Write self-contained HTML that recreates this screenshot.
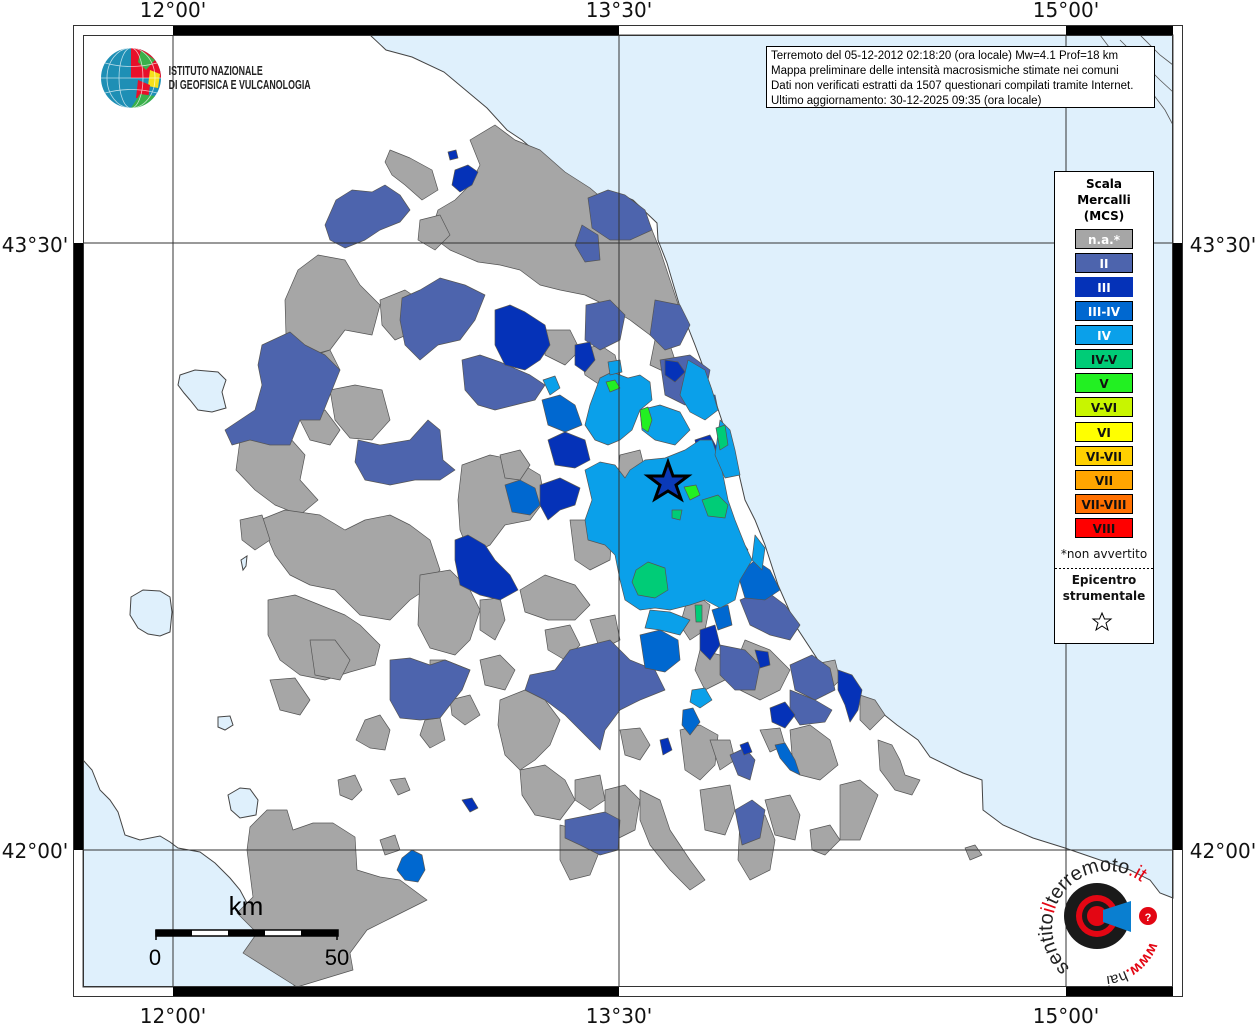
<!DOCTYPE html>
<html><head><meta charset="utf-8"><style>
html,body{margin:0;padding:0;background:#fff;width:1256px;height:1024px;overflow:hidden}
svg{display:block}
</style></head><body>
<svg width="1256" height="1024" viewBox="0 0 1256 1024" xmlns="http://www.w3.org/2000/svg" font-family="Liberation Sans, sans-serif">
<rect x="0" y="0" width="1256" height="1024" fill="#fff"/>
<!-- Seas -->
<g fill="#dff0fc" stroke="#444" stroke-width="1">
<path d="M370,35 L386,50 L412,57 L444,72 L487,108 L507,130 L522,140 L537,153 L560,173 L582,185 L600,197 L617,193 L633,200 L657,223 L658,240 L667,263 L680,307 L695,345 L710,385 L725,430 L738,470 L745,500 L755,520 L765,545 L778,585 L797,628 L820,663 L857,693 L897,725 L918,740 L930,757 L963,773 L982,780 L983,810 L1003,825 L1033,838 L1065,848 L1100,860 L1130,870 L1150,880 L1160,893 L1173,898 L1173,35 Z"/>
<path d="M83,760 L92,770 L100,790 L110,800 L118,812 L125,835 L140,840 L160,836 L170,842 L178,848 L200,852 L215,863 L230,878 L240,890 L248,905 L252,925 L256,935 L258,948 L270,950 L278,955 L295,987 L83,987 Z"/>
<path d="M180,375 L195,370 L218,372 L226,380 L222,392 L226,408 L212,412 L198,410 L190,400 L184,393 L178,385 Z"/>
<path d="M131,597 L143,590 L160,591 L170,597 L172,612 L170,632 L160,636 L148,634 L138,628 L130,615 Z"/>
<path d="M228,795 L240,788 L250,789 L258,800 L256,815 L240,818 L231,810 Z"/>
<path d="M218,717 L230,716 L233,725 L225,730 L218,727 Z"/>
<path d="M241,560 L247,556 L246,566 L243,570 Z"/>
</g>
<g fill="none" stroke="#555" stroke-width="0.8">
<path d="M1100,35 L1115,55 L1130,70 L1150,90 L1165,110 L1173,125"/>
<path d="M1120,40 L1140,60 L1160,80 L1173,92"/>
<path d="M1140,35 L1160,55 L1173,65"/>
</g>
<!-- Land municipalities -->
<g stroke="#555" stroke-width="0.7" stroke-linejoin="round">
<g fill="#a6a6a6">
<path d="M470,140 L495,125 L515,140 L540,150 L565,172 L590,188 L610,205 L630,200 L650,225 L660,250 L670,280 L680,310 L670,330 L650,335 L630,320 L605,305 L585,295 L560,290 L540,285 L520,270 L500,265 L478,262 L450,250 L430,235 L438,210 L455,200 L470,185 L480,165 Z"/>
<path d="M390,150 L410,158 L432,170 L438,190 L422,200 L405,185 L392,175 L385,162 Z"/>
<path d="M298,270 L318,255 L345,260 L360,285 L380,305 L372,335 L345,330 L330,350 L300,358 L286,335 L285,300 Z"/>
<path d="M330,390 L355,385 L382,390 L390,420 L372,440 L350,438 L335,420 Z"/>
<path d="M380,300 L405,290 L420,300 L418,330 L395,340 L382,325 Z"/>
<path d="M240,440 L262,432 L290,438 L305,455 L300,480 L318,500 L300,515 L275,505 L255,490 L236,470 Z"/>
<path d="M260,520 L285,510 L320,515 L345,530 L365,520 L390,515 L410,525 L430,540 L440,570 L425,590 L410,600 L390,620 L360,615 L335,590 L310,585 L290,575 L275,555 Z"/>
<path d="M462,465 L490,455 L515,460 L540,475 L545,500 L530,520 L505,525 L490,545 L470,555 L460,530 L458,500 Z"/>
<path d="M268,600 L295,595 L320,605 L345,615 L360,625 L380,645 L375,665 L350,672 L325,680 L300,675 L280,660 L268,635 Z"/>
<path d="M420,575 L450,570 L470,590 L480,610 L470,640 L455,655 L430,648 L418,625 Z"/>
<path d="M480,600 L500,598 L505,620 L495,640 L480,630 Z"/>
<path d="M520,590 L545,575 L575,585 L590,605 L575,620 L548,620 L525,612 Z"/>
<path d="M570,520 L600,520 L612,535 L610,560 L590,570 L575,560 Z"/>
<path d="M500,455 L520,450 L530,465 L520,480 L505,478 Z"/>
<path d="M300,360 L330,350 L340,370 L325,390 L305,385 Z"/>
<path d="M300,420 L325,410 L340,430 L330,445 L310,440 Z"/>
<path d="M240,520 L262,515 L270,540 L255,550 L242,540 Z"/>
<path d="M270,680 L295,678 L310,700 L300,715 L280,710 Z"/>
<path d="M310,640 L335,640 L350,660 L340,680 L315,675 Z"/>
<path d="M430,660 L445,660 L470,670 L462,690 L445,700 L430,685 Z"/>
<path d="M480,660 L500,655 L515,670 L505,690 L485,685 Z"/>
<path d="M545,630 L570,625 L580,645 L565,660 L548,650 Z"/>
<path d="M590,620 L615,615 L620,640 L600,650 Z"/>
<path d="M450,700 L470,695 L480,715 L465,725 L452,715 Z"/>
<path d="M425,720 L440,718 L445,740 L430,748 L420,735 Z"/>
<path d="M365,720 L380,715 L390,730 L385,750 L370,748 L356,740 Z"/>
<path d="M338,780 L355,775 L362,790 L352,800 L340,795 Z"/>
<path d="M390,780 L405,778 L410,790 L398,795 Z"/>
<path d="M267,810 L287,810 L293,830 L313,823 L333,823 L355,837 L357,870 L380,877 L400,880 L427,900 L393,917 L367,930 L350,953 L353,970 L297,987 L243,953 L257,933 L237,913 L253,897 L247,850 L250,827 Z"/>
<path d="M500,700 L525,690 L545,700 L560,720 L550,745 L535,760 L520,770 L505,755 L498,725 Z"/>
<path d="M520,770 L545,765 L565,780 L575,800 L560,820 L535,815 L522,795 Z"/>
<path d="M560,825 L580,830 L600,850 L590,875 L570,880 L560,860 Z"/>
<path d="M575,780 L600,775 L605,800 L590,810 L575,800 Z"/>
<path d="M605,790 L625,785 L640,800 L635,830 L615,840 L605,815 Z"/>
<path d="M640,790 L660,800 L670,830 L690,860 L705,880 L690,890 L670,870 L650,845 L640,820 Z"/>
<path d="M620,730 L640,728 L650,745 L640,760 L625,755 Z"/>
<path d="M680,730 L700,725 L718,735 L715,765 L700,780 L685,770 Z"/>
<path d="M700,790 L730,785 L735,810 L725,835 L705,830 Z"/>
<path d="M740,820 L765,815 L775,840 L770,870 L750,880 L738,860 Z"/>
<path d="M765,800 L790,795 L800,815 L795,840 L775,835 Z"/>
<path d="M810,830 L830,825 L840,840 L825,855 L812,850 Z"/>
<path d="M840,785 L860,780 L878,795 L870,815 L860,840 L840,840 Z"/>
<path d="M878,740 L892,745 L900,760 L905,775 L920,780 L912,795 L895,790 L880,770 Z"/>
<path d="M860,695 L875,700 L885,715 L870,730 L860,720 Z"/>
<path d="M790,730 L810,725 L830,740 L838,765 L820,780 L800,775 L792,755 Z"/>
<path d="M745,640 L770,650 L790,670 L780,690 L760,700 L740,690 L735,665 Z"/>
<path d="M700,650 L720,655 L725,680 L705,690 L695,670 Z"/>
<path d="M810,665 L835,660 L840,680 L825,695 L810,690 Z"/>
<path d="M710,740 L730,740 L735,760 L720,770 Z"/>
<path d="M760,730 L780,728 L785,745 L770,752 Z"/>
<path d="M965,848 L975,845 L982,855 L970,860 Z"/>
<path d="M690,590 L710,605 L705,630 L690,640 L680,625 Z"/>
<path d="M580,350 L600,345 L615,355 L620,375 L600,385 L585,375 Z"/>
<path d="M655,340 L670,345 L675,360 L665,372 L650,365 Z"/>
<path d="M620,455 L640,450 L645,470 L630,485 L618,475 Z"/>
<path d="M545,330 L570,330 L580,350 L565,365 L545,355 Z"/>
<path d="M420,220 L440,215 L450,235 L435,250 L418,240 Z"/>
<path d="M380,840 L395,835 L400,850 L385,855 Z"/>
</g>
<g fill="#4d64ad">
<path d="M336,200 L352,190 L372,192 L385,185 L400,195 L410,210 L400,222 L380,230 L365,240 L345,248 L330,240 L325,225 Z"/>
<path d="M402,298 L420,290 L440,278 L465,285 L485,295 L475,320 L460,340 L438,345 L420,360 L405,345 L400,320 Z"/>
<path d="M262,345 L290,332 L305,345 L325,355 L340,370 L330,395 L320,420 L300,420 L290,445 L270,445 L250,440 L232,445 L225,430 L240,420 L255,410 L262,385 L258,365 Z"/>
<path d="M358,440 L380,445 L410,440 L428,420 L440,430 L443,460 L455,470 L440,480 L415,480 L390,485 L365,480 L355,462 Z"/>
<path d="M462,360 L480,355 L500,362 L530,375 L545,385 L535,400 L515,405 L495,410 L478,405 L465,390 Z"/>
<path d="M588,198 L608,190 L625,195 L645,210 L652,230 L630,240 L610,240 L592,228 Z"/>
<path d="M586,305 L610,300 L625,315 L620,340 L600,350 L585,340 Z"/>
<path d="M655,300 L680,305 L690,325 L680,345 L665,350 L650,335 Z"/>
<path d="M660,360 L690,355 L710,370 L705,395 L685,405 L665,395 Z"/>
<path d="M530,675 L555,670 L570,650 L590,645 L610,640 L630,660 L655,670 L665,690 L640,700 L620,710 L605,730 L600,750 L585,735 L565,715 L545,700 L525,690 Z"/>
<path d="M390,660 L410,658 L430,665 L445,660 L470,670 L462,690 L450,705 L440,718 L420,720 L400,718 L390,700 Z"/>
<path d="M565,820 L590,815 L605,812 L620,820 L618,850 L600,855 L580,845 L565,838 Z"/>
<path d="M735,810 L752,800 L765,810 L760,838 L742,845 Z"/>
<path d="M740,600 L765,590 L785,605 L800,625 L790,640 L770,635 L750,625 Z"/>
<path d="M790,665 L812,655 L830,668 L835,690 L815,700 L795,690 Z"/>
<path d="M790,690 L815,700 L832,710 L825,722 L800,725 L790,710 Z"/>
<path d="M730,755 L745,748 L755,760 L750,780 L738,775 Z"/>
<path d="M720,645 L745,650 L760,665 L755,690 L735,690 L720,675 Z"/>
<path d="M582,225 L598,235 L600,260 L585,262 L575,245 Z"/>
</g>
<g fill="#0532b8">
<path d="M455,170 L468,165 L478,172 L472,185 L460,192 L452,185 Z"/>
<path d="M448,152 L456,150 L458,158 L450,160 Z"/>
<path d="M495,310 L510,305 L525,312 L545,325 L550,345 L540,360 L525,370 L505,365 L495,345 Z"/>
<path d="M455,540 L468,535 L485,545 L495,560 L510,575 L518,590 L500,600 L480,595 L460,585 L455,560 Z"/>
<path d="M540,485 L560,478 L580,488 L575,505 L560,510 L548,520 L540,505 Z"/>
<path d="M548,440 L565,432 L585,440 L590,460 L575,468 L555,465 Z"/>
<path d="M575,345 L590,342 L595,360 L585,372 L575,365 Z"/>
<path d="M640,475 L660,468 L680,470 L700,465 L695,440 L710,435 L718,450 L712,475 L700,490 L685,500 L670,498 L650,500 L640,490 Z"/>
<path d="M665,360 L678,362 L685,372 L675,382 L665,375 Z"/>
<path d="M838,670 L852,675 L862,690 L858,710 L850,722 L845,705 L838,690 Z"/>
<path d="M770,708 L785,702 L795,715 L785,728 L772,722 Z"/>
<path d="M700,630 L715,625 L720,645 L710,660 L700,650 Z"/>
<path d="M660,740 L668,738 L672,750 L663,755 Z"/>
<path d="M462,800 L472,798 L478,808 L470,812 Z"/>
<path d="M740,745 L748,742 L752,752 L744,755 Z"/>
<path d="M755,650 L768,652 L770,665 L760,668 Z"/>
</g>
<g fill="#0068d0">
<path d="M505,485 L520,480 L535,488 L540,505 L530,515 L512,512 Z"/>
<path d="M542,400 L560,395 L575,405 L582,425 L565,432 L548,425 Z"/>
<path d="M600,395 L620,400 L625,415 L612,425 L600,415 Z"/>
<path d="M640,635 L660,630 L678,640 L680,660 L665,672 L645,668 Z"/>
<path d="M738,575 L755,560 L770,570 L780,590 L765,600 L745,598 Z"/>
<path d="M720,540 L738,535 L748,550 L735,560 L722,555 Z"/>
<path d="M402,858 L412,850 L422,855 L425,870 L418,882 L405,880 L397,870 Z"/>
<path d="M775,745 L785,743 L795,760 L800,775 L790,770 L780,758 Z"/>
<path d="M683,710 L693,708 L700,722 L690,735 L682,725 Z"/>
<path d="M702,398 L715,395 L718,410 L705,412 Z"/>
<path d="M712,610 L728,605 L732,625 L718,630 Z"/>
</g>
<g fill="#0aa0ea">
<path d="M585,470 L600,462 L615,465 L625,478 L630,470 L645,460 L665,458 L685,450 L700,440 L712,440 L722,470 L728,500 L735,520 L745,545 L752,560 L740,580 L735,600 L720,608 L705,600 L690,605 L670,610 L655,608 L640,610 L625,600 L620,580 L615,555 L605,545 L588,540 L585,520 L592,500 Z"/>
<path d="M600,378 L612,372 L628,378 L640,375 L650,382 L652,400 L640,410 L632,430 L620,440 L608,445 L595,440 L585,425 L590,405 Z"/>
<path d="M640,410 L660,405 L680,412 L690,430 L675,445 L655,440 L642,430 Z"/>
<path d="M688,360 L705,370 L712,390 L718,410 L705,420 L690,412 L680,395 Z"/>
<path d="M720,420 L730,430 L735,450 L740,475 L725,478 L715,455 Z"/>
<path d="M755,535 L765,548 L762,570 L752,560 Z"/>
<path d="M692,690 L705,688 L712,700 L700,708 L690,702 Z"/>
<path d="M543,380 L555,376 L560,388 L550,395 Z"/>
<path d="M608,362 L620,360 L622,372 L610,375 Z"/>
<path d="M650,610 L670,612 L690,620 L680,635 L660,630 L645,628 Z"/>
</g>
<g fill="#00cc77">
<path d="M636,570 L648,562 L665,568 L668,590 L655,598 L638,595 L632,582 Z"/>
<path d="M702,500 L718,495 L728,505 L725,518 L708,516 Z"/>
<path d="M716,428 L725,425 L728,445 L720,450 Z"/>
<path d="M672,510 L682,510 L680,520 L672,518 Z"/>
<path d="M695,605 L702,605 L702,622 L696,622 Z"/>
</g>
<g fill="#22f022">
<path d="M640,410 L648,407 L652,420 L648,432 L642,428 Z"/>
<path d="M606,382 L615,380 L620,388 L610,392 Z"/>
<path d="M684,487 L696,485 L700,495 L690,500 Z"/>
</g>
</g>
<g stroke="#333" stroke-width="1">
<line x1="173" y1="35" x2="173" y2="987"/>
<line x1="619" y1="35" x2="619" y2="987"/>
<line x1="1066" y1="35" x2="1066" y2="987"/>
<line x1="83" y1="243" x2="1173" y2="243"/>
<line x1="83" y1="850" x2="1173" y2="850"/>
</g>
<polygon points="668,462 673,476 688,476 676,485 681,499 668,491 655,499 660,485 648,476 663,476" fill="#0a3ab8" stroke="#000" stroke-width="3"/>
<g fill="#000">
<rect x="173" y="25" width="446" height="10"/>
<rect x="1066" y="25" width="107" height="10"/>
<rect x="173" y="987" width="446" height="10"/>
<rect x="1066" y="987" width="107" height="10"/>
<rect x="73" y="243" width="10" height="607"/>
<rect x="1173" y="243" width="10" height="607"/>
</g>
<rect x="73.5" y="25.5" width="1109" height="971" fill="none" stroke="#333" stroke-width="1"/>
<rect x="83.5" y="35.5" width="1089" height="951" fill="none" stroke="#333" stroke-width="1"/>
<g font-family="DejaVu Sans, sans-serif" font-size="20" fill="#111" text-anchor="middle">
<text x="173" y="17">12°00'</text>
<text x="619" y="17">13°30'</text>
<text x="1066" y="17">15°00'</text>
<text x="173" y="1023">12°00'</text>
<text x="619" y="1023">13°30'</text>
<text x="1066" y="1023">15°00'</text>
<text x="35" y="252">43°30'</text>
<text x="35" y="858">42°00'</text>
<text x="1223" y="252">43°30'</text>
<text x="1223" y="858">42°00'</text>
</g>
<rect x="766.5" y="46.5" width="388" height="61" fill="#fff" stroke="#000"/>
<g font-size="11.5" fill="#000">
<text x="771" y="59">Terremoto del 05-12-2012 02:18:20 (ora locale) Mw=4.1 Prof=18 km</text>
<text x="771" y="74">Mappa preliminare delle intensità macrosismiche stimate nei comuni</text>
<text x="771" y="89">Dati non verificati estratti da 1507 questionari compilati tramite Internet.</text>
<text x="771" y="104">Ultimo aggiornamento: 30-12-2025 09:35 (ora locale)</text>
</g>
<rect x="1054.5" y="171.5" width="99" height="472" fill="#fff" stroke="#000"/>
<g font-family="DejaVu Sans, sans-serif" font-size="12" font-weight="bold" text-anchor="middle">
<text x="1104" y="188">Scala</text>
<text x="1104" y="204">Mercalli</text>
<text x="1104" y="220">(MCS)</text>
<rect x="1075.5" y="229.5" width="57" height="19" fill="#a6a6a6" stroke="#000"/><text x="1104" y="244" fill="#fff">n.a.*</text>
<rect x="1075.5" y="253.5" width="57" height="19" fill="#4d64ad" stroke="#000"/><text x="1104" y="268" fill="#fff">II</text>
<rect x="1075.5" y="277.5" width="57" height="19" fill="#0532b8" stroke="#0532b8"/><text x="1104" y="292" fill="#fff">III</text>
<rect x="1075.5" y="301.5" width="57" height="19" fill="#0068d0" stroke="#000"/><text x="1104" y="316" fill="#fff">III-IV</text>
<rect x="1075.5" y="325.5" width="57" height="19" fill="#0aa0ea" stroke="#000"/><text x="1104" y="340" fill="#fff">IV</text>
<rect x="1075.5" y="349.5" width="57" height="19" fill="#00cc77" stroke="#000"/><text x="1104" y="364" fill="#111">IV-V</text>
<rect x="1075.5" y="373.5" width="57" height="19" fill="#22f022" stroke="#000"/><text x="1104" y="388" fill="#111">V</text>
<rect x="1075.5" y="397.5" width="57" height="19" fill="#c8f500" stroke="#000"/><text x="1104" y="412" fill="#111">V-VI</text>
<rect x="1075.5" y="422.5" width="57" height="19" fill="#ffff00" stroke="#000"/><text x="1104" y="437" fill="#111">VI</text>
<rect x="1075.5" y="446.5" width="57" height="19" fill="#ffd000" stroke="#000"/><text x="1104" y="461" fill="#111">VI-VII</text>
<rect x="1075.5" y="470.5" width="57" height="19" fill="#ffa500" stroke="#000"/><text x="1104" y="485" fill="#111">VII</text>
<rect x="1075.5" y="494.5" width="57" height="19" fill="#ff7000" stroke="#000"/><text x="1104" y="509" fill="#111">VII-VIII</text>
<rect x="1075.5" y="518.5" width="57" height="19" fill="#ff0000" stroke="#000"/><text x="1104" y="533" fill="#111">VIII</text>
<text x="1104" y="558" font-weight="normal" fill="#111">*non avvertito</text>
<text x="1104" y="584" fill="#111">Epicentro</text>
<text x="1104" y="600" fill="#111">strumentale</text>
</g>
<line x1="1055" y1="568.5" x2="1153" y2="568.5" stroke="#000" stroke-dasharray="2,2"/>
<polygon points="1102,613 1104.5,619 1111,619 1106,623 1108,630 1102,626 1096,630 1098,623 1093,619 1099.5,619" fill="#fff" stroke="#000" stroke-width="1"/>
<g>
<rect x="156" y="930" width="182" height="6" fill="#fff" stroke="#000" stroke-width="1.5"/>
<rect x="156" y="930" width="36" height="6" fill="#000"/>
<rect x="228" y="930" width="37" height="6" fill="#000"/>
<rect x="301" y="930" width="37" height="6" fill="#000"/>
<line x1="156" y1="930" x2="156" y2="940" stroke="#000" stroke-width="1.5"/>
<line x1="337" y1="930" x2="337" y2="940" stroke="#000" stroke-width="1.5"/>
<text x="246" y="915" font-size="26" text-anchor="middle" fill="#000">km</text>
<text x="155" y="965" font-size="22" text-anchor="middle" fill="#000">0</text>
<text x="337" y="965" font-size="22" text-anchor="middle" fill="#000">50</text>
</g>
<g>
<circle cx="131" cy="78" r="30" fill="#1e8fb5"/>
<path d="M131,48 A30,30 0 0 1 161,78 L131,78 Z" fill="#e8102a"/>
<path d="M141,50 L155,60 L146,70 L138,62 Z" fill="#3ab04a"/>
<path d="M150,70 L160,74 L158,88 L148,86 Z" fill="#f5e11a"/>
<path d="M138,80 L150,85 L148,100 L136,98 Z" fill="#e8102a"/>
<path d="M131,108 A30,30 0 0 0 155,96 L140,94 Z" fill="#3ab04a"/>
<g fill="none" stroke="#fff" stroke-width="0.8" opacity="0.7">
<ellipse cx="131" cy="78" rx="12" ry="30"/><ellipse cx="131" cy="78" rx="24" ry="30"/>
<line x1="101" y1="78" x2="161" y2="78"/><path d="M105,63 Q131,70 157,63"/><path d="M105,93 Q131,86 157,93"/>
</g>
<g font-size="13" font-weight="bold" fill="#222" transform="scale(0.68,1)">
<text x="248" y="75">ISTITUTO NAZIONALE</text>
<text x="248" y="89">DI GEOFISICA E VULCANOLOGIA</text>
</g>
</g>
<g>
<circle cx="1097" cy="916" r="33" fill="#1a1a1a"/>
<circle cx="1097" cy="916" r="21" fill="#e30613"/>
<circle cx="1097" cy="916" r="15" fill="#1a1a1a"/>
<circle cx="1097" cy="916" r="10" fill="#e30613"/>
<path d="M1103,910 L1131,901 L1131,932 L1103,922 Z" fill="#0a7fd0"/>
<circle cx="1148" cy="916" r="9" fill="#e30613"/>
<text x="1148" y="921" font-size="11" font-weight="bold" fill="#fff" text-anchor="middle">?</text>
<defs><path id="arc" d="M1070,968 A50,50 0 1 1 1146,886"/></defs>
<text font-size="20" fill="#222"><textPath href="#arc">sentito<tspan fill="#e30613">il</tspan>terremoto<tspan fill="#e30613">.it</tspan></textPath></text>
<defs><path id="arc2" d="M1150,942 A52,52 0 0 1 1080,972"/></defs>
<text font-size="15" fill="#222"><textPath href="#arc2"><tspan fill="#e30613" font-weight="bold">www.</tspan>hai</textPath></text>
</g>
</svg>
</body></html>
